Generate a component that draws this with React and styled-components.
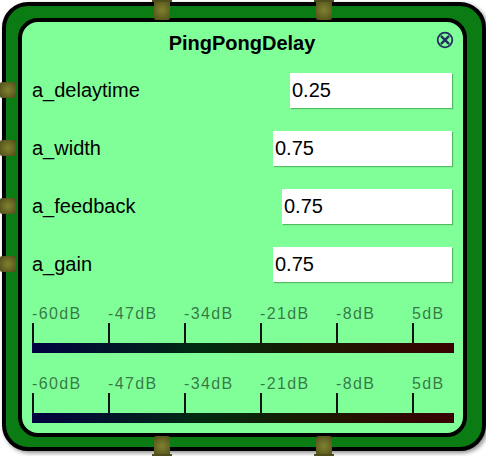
import React from 'react';
import styled, { createGlobalStyle } from 'styled-components';

const Global = createGlobalStyle`
  html, body { margin: 0; padding: 0; background: #fff; }
  body { font-family: "Liberation Sans", Arial, Helvetica, sans-serif; }
`;

const Canvas = styled.div`
  position: relative;
  width: 486px;
  height: 456px;
  overflow: hidden;
  box-sizing: border-box;
  padding: 2px 0 0 2px;
`;

const Node = styled.div`
  box-sizing: border-box;
  width: 484px;
  height: 449px;
  border: 4px solid #000;
  border-radius: 26px;
  background: #0b7b14;
  padding: 12px 15px 10px 12px;
  box-shadow: 2px 2px 4px rgba(0, 0, 0, 0.45);
`;

const Panel = styled.div`
  position: relative;
  box-sizing: border-box;
  width: 100%;
  height: 100%;
  border: 4px solid #000;
  border-radius: 20px;
  background: #80ff99;
  padding: 10px 11px 0 10px;
  display: flex;
  flex-direction: column;
`;

const Title = styled.div`
  font-weight: bold;
  font-size: 20px;
  line-height: 23px;
  text-align: center;
  color: #000;
  margin-bottom: 18px;
`;

const Close = styled.button`
  position: absolute;
  top: 9px;
  right: 9px;
  width: 18px;
  height: 18px;
  padding: 0;
  border: none;
  background: none;
  display: block;
`;

const Rows = styled.div`
  display: flex;
  flex-direction: column;
  gap: 23px;
`;

const Row = styled.div`
  display: flex;
  align-items: center;
  justify-content: space-between;
  height: 35px;
`;

const Label = styled.span`
  font-size: 20px;
  line-height: 23px;
  color: #000;
`;

const Input = styled.input`
  box-sizing: border-box;
  width: ${(p) => p.$w}px;
  height: 35px;
  border: none;
  outline: none;
  background: #fff;
  padding: 0 2px;
  font-family: "Liberation Sans", Arial, sans-serif;
  font-size: 20px;
  color: #000;
  box-shadow: 1px 1px 1px rgba(0, 60, 0, 0.35);
`;

const Meter = styled.div`
  width: 422px;
  margin-top: ${(p) => p.$top}px;
`;

const Scale = styled.div`
  display: grid;
  grid-template-columns: repeat(5, 76px) 1fr;
`;

const Mark = styled.div`
  display: flex;
  flex-direction: column;
  align-items: flex-start;
`;

const MarkText = styled.span`
  font-size: 16px;
  line-height: 16px;
  letter-spacing: 1.4px;
  color: rgba(20, 60, 30, 0.7);
  margin-left: 0;
  margin-bottom: 1px;
`;

const Tick = styled.div`
  width: 2px;
  height: 20px;
  background: #111;
`;

const Bar = styled.div`
  height: 10px;
  background: linear-gradient(to right, #000040 0%, #002a10 40%, #1a1a00 65%, #3a0000 100%);
`;

const Port = styled.div`
  position: absolute;
  width: 16px;
  height: ${(p) => (p.$side === 'left' ? 16 : 20)}px;
  left: ${(p) => p.$x}px;
  top: ${(p) => p.$y}px;
  background: radial-gradient(circle at 50% 50%, #80802f 0%, #6a6a26 45%, #4a4a18 100%);
  border-radius: 2px;
  &::before {
    content: '';
    display: ${(p) => (p.$side === 'left' ? 'none' : 'block')};
    position: absolute;
    left: -2px;
    right: -2px;
    height: 2px;
    ${(p) => (p.$side === 'top' ? 'top: 0;' : 'bottom: 0;')}
    background: #4e4e1c;
  }
`;

const marks = ['-60dB', '-47dB', '-34dB', '-21dB', '-8dB', '5dB'];

const fields = [
  { name: 'a_delaytime', value: '0.25', w: 162 },
  { name: 'a_width', value: '0.75', w: 179 },
  { name: 'a_feedback', value: '0.75', w: 170 },
  { name: 'a_gain', value: '0.75', w: 179 },
];

function LevelMeter({ top }) {
  return (
    <Meter $top={top}>
      <Scale>
        {marks.map((m) => (
          <Mark key={m}>
            <MarkText>{m}</MarkText>
            <Tick />
          </Mark>
        ))}
      </Scale>
      <Bar />
    </Meter>
  );
}

export default function App() {
  return (
    <>
      <Global />
      <Canvas>
        <Node>
          <Panel>
            <Title>PingPongDelay</Title>
            <Close aria-label="close">
              <svg width="18" height="18" viewBox="0 0 18 18">
                <circle cx="9" cy="9" r="7.3" fill="none" stroke="#23305e" strokeWidth="1.8" />
                <path d="M5.6 5.6 L12.4 12.4 M12.4 5.6 L5.6 12.4" stroke="#23305e" strokeWidth="2.4" strokeLinecap="round" />
              </svg>
            </Close>
            <Rows>
              {fields.map((f) => (
                <Row key={f.name}>
                  <Label>{f.name}</Label>
                  <Input $w={f.w} defaultValue={f.value} />
                </Row>
              ))}
            </Rows>
            <LevelMeter top={24} />
            <LevelMeter top={23} />
          </Panel>
        </Node>
        <Port $side="top" $x={154} $y={0} />
        <Port $side="top" $x={316} $y={0} />
        <Port $side="bottom" $x={154} $y={436} />
        <Port $side="bottom" $x={316} $y={436} />
        <Port $side="left" $x={0} $y={82} />
        <Port $side="left" $x={0} $y={140} />
        <Port $side="left" $x={0} $y={198} />
        <Port $side="left" $x={0} $y={256} />
      </Canvas>
    </>
  );
}
